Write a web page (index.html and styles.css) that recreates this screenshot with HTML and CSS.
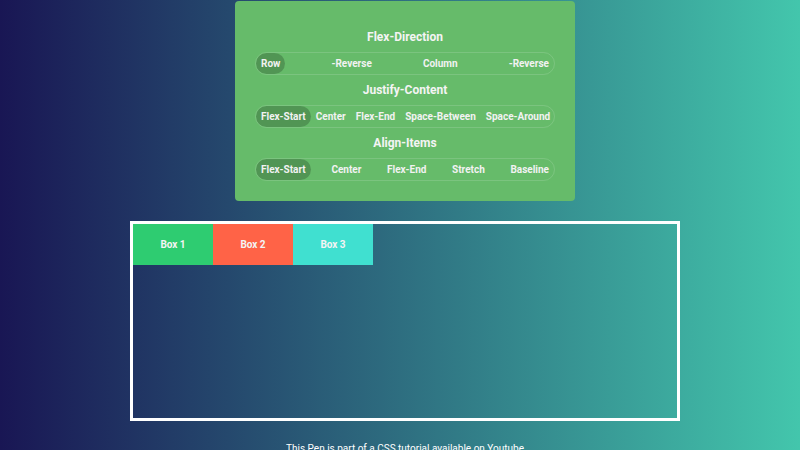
FILE: index.html
```html
<!DOCTYPE html>
<html>
<head>
<meta charset="utf-8">
<link rel="stylesheet" href="styles.css">
</head>
<body>
<div class="page">
  <div class="panel">
    <h3 class="title">Flex-Direction</h3>
    <div class="group spread">
      <span class="btn active">Row</span>
      <span class="btn">-Reverse</span>
      <span class="btn">Column</span>
      <span class="btn">-Reverse</span>
    </div>
    <h3 class="title">Justify-Content</h3>
    <div class="group spread">
      <span class="btn active">Flex-Start</span>
      <span class="btn">Center</span>
      <span class="btn">Flex-End</span>
      <span class="btn">Space-Between</span>
      <span class="btn">Space-Around</span>
    </div>
    <h3 class="title">Align-Items</h3>
    <div class="group spread">
      <span class="btn active">Flex-Start</span>
      <span class="btn">Center</span>
      <span class="btn">Flex-End</span>
      <span class="btn">Stretch</span>
      <span class="btn">Baseline</span>
    </div>
  </div>
  <div class="stage">
    <div class="box b1">Box 1</div>
    <div class="box b2">Box 2</div>
    <div class="box b3">Box 3</div>
  </div>
  <p class="note">This Pen is part of a CSS tutorial available on Youtube</p>
</div>
</body>
</html>
```
FILE: styles.css
```css
html, body {
  margin: 0;
  height: 100%;
}
body {
  background: linear-gradient(to right, #191654, #43c6ac);
  font-family: Roboto, "Liberation Sans", sans-serif;
  color: #fff;
  overflow: hidden;
}
.page {
  display: flex;
  flex-direction: column;
  align-items: center;
  padding-left: 10px;
}
.panel {
  box-sizing: border-box;
  width: 340px;
  margin-top: 1px;
  padding: 28px 20px 20px;
  background: #66bb6a;
  border-radius: 4px;
  display: flex;
  flex-direction: column;
}
.title {
  margin: 0 0 7px;
  font-size: 12px;
  line-height: 16px;
  font-weight: 700;
  text-align: center;
  color: #f4f4f4;
}
.group {
  display: flex;
  justify-content: space-between;
  border: 1px solid rgba(255, 255, 255, 0.14);
  border-radius: 12px;
  margin-bottom: 7px;
}
.group:last-child {
  margin-bottom: 0;
}
.btn {
  padding: 0 5px;
  font-size: 10px;
  line-height: 21px;
  font-weight: 700;
  color: #f2f2f2;
  border-radius: 11px;
  white-space: nowrap;
}
.btn.active {
  background: rgba(0, 0, 0, 0.2);
}
.stage {
  box-sizing: border-box;
  width: 550px;
  height: 200px;
  margin-top: 20px;
  border: 3px solid #fff;
  display: flex;
  align-items: flex-start;
}
.box {
  width: 80px;
  height: 41px;
  display: flex;
  align-items: center;
  justify-content: center;
  font-size: 10px;
  font-weight: 700;
  color: #f4f4f4;
}
.b1 { background: #2ecc71; }
.b2 { background: #ff6347; }
.b3 { background: #40e0d0; }
.note {
  margin: 21px 0 0;
  font-size: 10px;
  line-height: 14px;
  color: #fff;
}
```
